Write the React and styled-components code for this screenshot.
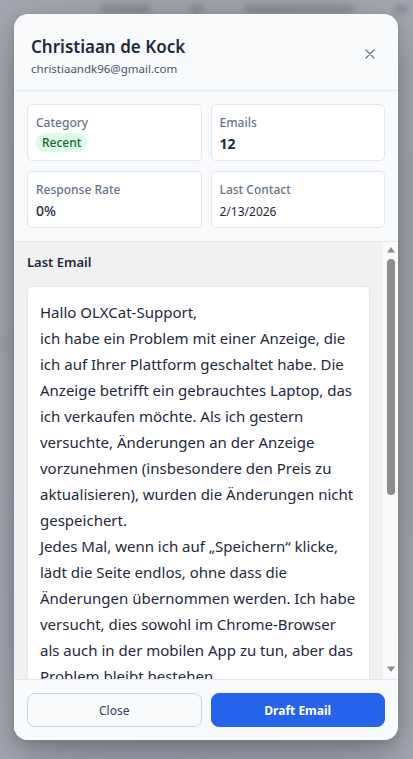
import React from "react";
import styled, { createGlobalStyle } from "styled-components";

const emailText = `Hallo OLXCat-Support,
ich habe ein Problem mit einer Anzeige, die ich auf Ihrer Plattform geschaltet habe. Die Anzeige betrifft ein gebrauchtes Laptop, das ich verkaufen möchte. Als ich gestern versuchte, Änderungen an der Anzeige vorzunehmen (insbesondere den Preis zu aktualisieren), wurden die Änderungen nicht gespeichert.
Jedes Mal, wenn ich auf „Speichern“ klicke, lädt die Seite endlos, ohne dass die Änderungen übernommen werden. Ich habe versucht, dies sowohl im Chrome-Browser als auch in der mobilen App zu tun, aber das Problem bleibt bestehen.
Ich habe bereits den Cache geleert, mich ab- und wieder angemeldet und einen anderen Computer ausprobiert, leider ohne Erfolg.
Könnten Sie sich das bitte ansehen und mir mitteilen, wie ich die Anzeige wieder bearbeiten kann?
Vielen Dank im Voraus für Ihre Hilfe.
Mit freundlichen Grüßen
Christiaan de Kock`;

function App() {
  return (
    <>
      <GlobalStyle />
      <Backdrop>
        <BlurredPage>
          <FakeCell style={{ width: 50 }} />
          <FakeCell style={{ width: 14 }} />
          <FakeCell style={{ width: 110 }} />
          <FakeCell style={{ width: 14 }} />
        </BlurredPage>
        <Modal>
          <Header>
            <div>
              <Title>Christiaan de Kock</Title>
              <Subtitle>christiaandk96@gmail.com</Subtitle>
            </div>
            <CloseIcon aria-label="close">
              <svg width="12" height="12" viewBox="0 0 12 12">
                <path d="M2 2l8 8M10 2l-8 8" stroke="#64748b" strokeWidth="1.2" strokeLinecap="round" />
              </svg>
            </CloseIcon>
          </Header>

          <Stats>
            <StatCard>
              <Label>Category</Label>
              <Badge>Recent</Badge>
            </StatCard>
            <StatCard>
              <Label>Emails</Label>
              <Value bold>12</Value>
            </StatCard>
            <StatCard>
              <Label>Response Rate</Label>
              <Value>0%</Value>
            </StatCard>
            <StatCard>
              <Label>Last Contact</Label>
              <Value small>2/13/2026</Value>
            </StatCard>
          </Stats>

          <Body>
            <ScrollContent>
              <SectionTitle>Last Email</SectionTitle>
              <EmailBox>{emailText}</EmailBox>
            </ScrollContent>
            <ScrollBar>
              <svg width="10" height="7" viewBox="0 0 10 7">
                <path d="M1 6.5L5 1L9 6.5Z" fill="#8c8c8c" />
              </svg>
              <Thumb />
              <svg width="10" height="7" viewBox="0 0 10 7">
                <path d="M1 0.5L5 6L9 0.5Z" fill="#8c8c8c" />
              </svg>
            </ScrollBar>
          </Body>

          <Footer>
            <Button>Close</Button>
            <Button primary>Draft Email</Button>
          </Footer>
        </Modal>
      </Backdrop>
    </>
  );
}

export default App;

const GlobalStyle = createGlobalStyle`
  * { box-sizing: border-box; }
  html, body {
    margin: 0;
    padding: 0;
    font-family: "Noto Sans", "Open Sans", sans-serif;
    color: #1e293b;
  }
`;

const Backdrop = styled.div`
  position: relative;
  width: 413px;
  height: 759px;
  padding: 14px 15px 19px 14px;
  display: flex;
  align-items: stretch;
  justify-content: center;
  background: radial-gradient(ellipse at 50% 45%, #8d909a 0%, #9da0a9 55%, #a6a9b1 100%);
  overflow: hidden;
`;

const BlurredPage = styled.div`
  position: absolute;
  top: 5px;
  left: 100px;
  display: flex;
  gap: 40px;
  filter: blur(3px);
  opacity: 0.5;
`;

const FakeCell = styled.div`
  height: 8px;
  background: #6b6f7a;
  border-radius: 4px;
`;

const Modal = styled.div`
  position: relative;
  width: 384px;
  display: flex;
  flex-direction: column;
  background: #f8fafc;
  border-radius: 14px;
  overflow: hidden;
  box-shadow: 0 20px 40px rgba(15, 23, 42, 0.25), 0 4px 12px rgba(15, 23, 42, 0.15);
`;

const Header = styled.div`
  display: flex;
  justify-content: space-between;
  align-items: center;
  padding: 20px 22px 12px 17px;
  border-bottom: 1px solid #e2e8f0;
`;

const Title = styled.h2`
  margin: 0;
  font-size: 17px;
  font-weight: 600;
  line-height: 26px;
  color: #1e293b;
`;

const Subtitle = styled.div`
  font-size: 11.5px;
  line-height: 18px;
  color: #475569;
`;

const CloseIcon = styled.button`
  border: none;
  background: none;
  padding: 0;
  display: flex;
  cursor: pointer;
  margin-top: -4px;
`;

const Stats = styled.div`
  display: grid;
  grid-template-columns: 1fr 1fr;
  gap: 10px 9px;
  padding: 13px;
  border-bottom: 1px solid #e2e8f0;
`;

const StatCard = styled.div`
  background: #fff;
  border: 1px solid #e2e8f0;
  border-radius: 5px;
  padding: 9px 8px 8px;
  height: 57px;
  display: flex;
  flex-direction: column;
  align-items: flex-start;
`;

const Label = styled.div`
  font-size: 12px;
  font-weight: 500;
  line-height: 17px;
  color: #64748b;
`;

const Value = styled.div`
  margin-top: ${(p) => (p.small ? "4px" : "3px")};
  font-size: ${(p) => (p.small ? "12px" : "14px")};
  font-weight: ${(p) => (p.bold ? 700 : p.small ? 400 : 500)};
  line-height: 20px;
  color: #1e293b;
`;

const Badge = styled.span`
  margin-top: 2px;
  display: inline-block;
  padding: 1px 6px;
  font-size: 12px;
  font-weight: 500;
  line-height: 17px;
  color: #166534;
  background: #dcfce7;
  border-radius: 999px;
`;

const Body = styled.div`
  flex: 1;
  min-height: 0;
  display: flex;
  background: #f1f1f1;
`;

const ScrollContent = styled.div`
  flex: 1;
  min-width: 0;
  overflow-y: auto;
  scrollbar-width: none;
  padding: 10px 13px 13px;
`;

const ScrollBar = styled.div`
  width: 15px;
  flex-shrink: 0;
  display: flex;
  flex-direction: column;
  align-items: center;
  padding: 4px 0 6px;
  background: #fafafa;

  svg {
    flex-shrink: 0;
  }
`;

const Thumb = styled.div`
  width: 8px;
  height: 236px;
  margin-top: 6px;
  margin-bottom: auto;
  border-radius: 4px;
  background: #8c8c8c;
`;

const SectionTitle = styled.div`
  font-size: 13px;
  font-weight: 600;
  line-height: 20px;
  color: #1e293b;
  margin-bottom: 14px;
`;

const EmailBox = styled.div`
  background: #fff;
  border: 1px solid #e2e8f0;
  border-radius: 5px;
  padding: 12px;
  font-size: 15px;
  line-height: 26px;
  color: #1e293b;
  white-space: pre-wrap;
`;

const Footer = styled.div`
  display: grid;
  grid-template-columns: 1fr 1fr;
  gap: 9px;
  padding: 13px;
  border-top: 1px solid #e2e8f0;
  background: #f8fafc;
`;

const Button = styled.button`
  height: 34px;
  border-radius: 8px;
  font-family: inherit;
  font-size: 12px;
  font-weight: ${(p) => (p.primary ? 700 : 400)};
  cursor: pointer;
  color: ${(p) => (p.primary ? "#fff" : "#334155")};
  background: ${(p) => (p.primary ? "#2563eb" : "#f8fafc")};
  border: 1px solid ${(p) => (p.primary ? "#2563eb" : "#cbd5e1")};
`;
